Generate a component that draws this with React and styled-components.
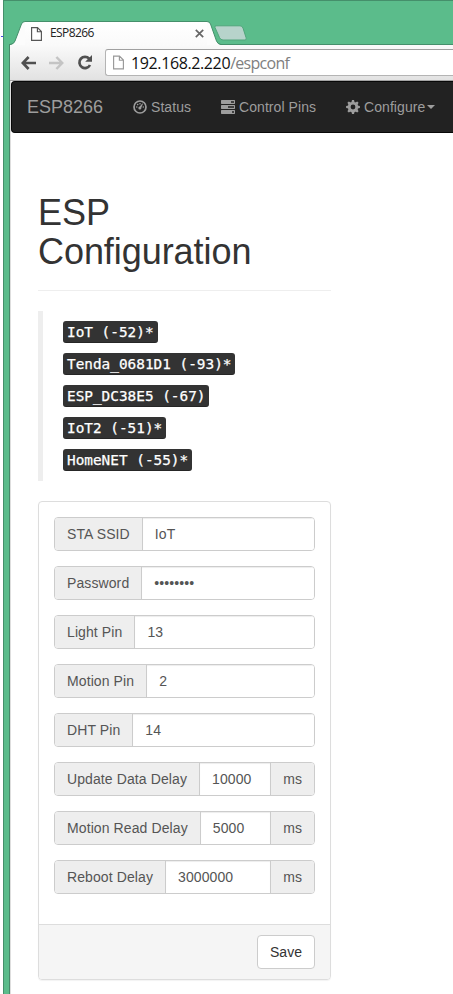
import React from "react";
import styled, { createGlobalStyle } from "styled-components";

const GlobalStyle = createGlobalStyle`
  *, *::before, *::after { box-sizing: border-box; }
  html, body { margin: 0; background: #fff; overflow: hidden; }
  body { font: 14px/20px "Liberation Sans", Arial, sans-serif; color: #333; }
  svg { display: block; flex: none; }
`;

const Desktop = styled.div`
  position: relative;
  height: 994px;
  padding-left: 3px;
  overflow: hidden;
`;

const DesktopMark = styled.i`
  position: absolute;
  left: 1px;
  top: 36px;
  width: 2px;
  height: 1px;
  background: #4747e6;
`;

const Frame = styled.div`
  height: 100%;
  display: flex;
  flex-direction: column;
  background: #5bbc8b;
  border-left: 1px solid #458f6b;
  border-top: 1px solid #458f6b;
`;

const TabStrip = styled.div`
  height: 43px;
  display: flex;
  align-items: flex-end;
  padding-left: 5px;
`;

const Tab = styled.div`
  display: flex;
  height: 24px;
  margin-bottom: -1px;
  z-index: 1;
`;

const TabBody = styled.div`
  width: 182px;
  display: flex;
  align-items: center;
  border-top: 1px solid #458f6b;
  background: linear-gradient(#fff, #fafafa);
  padding: 0 3px 0 6px;
`;

const TabTitle = styled.span`
  flex: 1;
  margin: -2px 0 0 8px;
  font: 12px/16px "Open Sans", "Noto Sans", sans-serif;
  letter-spacing: -0.6px;
  color: #222;
`;

const NewTab = styled.svg`
  margin: 0 0 3px -7px;
`;

const Window = styled.div`
  flex: 1;
  margin-left: 5px;
  display: flex;
  flex-direction: column;
  background: #fff;
  border-left: 1px solid #47896a;
`;

const Toolbar = styled.div`
  height: 37px;
  flex: none;
  display: flex;
  align-items: center;
  gap: 13px;
  padding-left: 11px;
  border-top: 1px solid #458f6b;
  border-bottom: 1px solid #a4a4a4;
  background: linear-gradient(#fafafa, #e2e2e2);
`;

const AddressBar = styled.div`
  flex: 1;
  height: 27px;
  margin-left: -1px;
  display: flex;
  align-items: center;
  gap: 7px;
  padding-left: 7px;
  background: #fff;
  border: 1px solid #b4b4b4;
  border-top-color: #a0a0a0;
  border-right: 0;
  border-radius: 3px 0 0 3px;
`;

const Address = styled.span`
  font: 16px/24px "Open Sans", "Noto Sans", sans-serif;
  letter-spacing: -0.38px;
  color: #111;
`;

const AddressPath = styled.span`
  color: #808080;
  letter-spacing: -0.7px;
`;

const Page = styled.div`
  flex: 1;
  border-left: 1px solid #dedede;
`;

const NavBar = styled.nav`
  height: 52px;
  display: flex;
  align-items: center;
  background: #222;
  border: 1px solid #080808;
  border-right: 0;
  border-radius: 4px 0 0 4px;
  color: #9d9d9d;
  padding-left: 15px;
  white-space: nowrap;
`;

const Brand = styled.span`
  flex: none;
  font-size: 18px;
  width: 106px;
`;

const NavItem = styled.span`
  flex: none;
  display: flex;
  align-items: center;
  gap: 4px;
  margin-right: 30px;
  letter-spacing: 0.06px;
`;

const Caret = styled.i`
  margin-left: -2px;
  border: 4px solid transparent;
  border-top-color: currentColor;
  border-bottom: 0;
`;

const Content = styled.main`
  width: 293px;
  margin: 60px 0 0 27px;
`;

const Heading = styled.h1`
  margin: 0;
  font-size: 36px;
  line-height: 39px;
  letter-spacing: -0.06px;
  font-weight: 400;
  width: 240px;
`;

const Rule = styled.hr`
  margin: 19px 0 20px;
  border: 0;
  border-top: 1px solid #eee;
`;

const Networks = styled.div`
  height: 170px;
  display: flex;
  flex-direction: column;
  align-items: flex-start;
  gap: 10px;
  padding: 10px 20px;
  border-left: 5px solid #eee;
`;

const Network = styled.kbd`
  height: 22px;
  padding: 0 4px;
  font: 14.38px/23px "DejaVu Sans Mono", monospace;
  -webkit-text-stroke: 0.25px #fff;
  color: #fff;
  background: #333;
  border-radius: 3px;
  box-shadow: inset 0 -1px 0 rgba(0, 0, 0, 0.25);
  white-space: pre;
`;

const Panel = styled.form`
  height: 479px;
  margin-top: 20px;
  display: flex;
  flex-direction: column;
  border: 1px solid #ddd;
  border-radius: 4px;
  box-shadow: 0 1px 1px rgba(0, 0, 0, 0.05);
`;

const PanelBody = styled.div`
  flex: 1;
  display: flex;
  flex-direction: column;
  gap: 15px;
  padding: 15px;
`;

const PanelFooter = styled.div`
  height: 55px;
  display: flex;
  justify-content: flex-end;
  padding: 10px 15px;
  background: #f5f5f5;
  border-top: 1px solid #ddd;
  border-radius: 0 0 3px 3px;
`;

const Group = styled.label`
  height: 34px;
  display: flex;
  border: 1px solid #ccc;
  border-radius: 4px;
  overflow: hidden;
  color: #555;
`;

const Addon = styled.span`
  flex: none;
  padding: 6px 12px;
  background: #eee;
  white-space: nowrap;
  letter-spacing: ${(p) => (p.$unit ? "0" : "0.1px")};
`;

const Input = styled.input`
  flex: 1;
  min-width: 0;
  padding: 0 12px;
  border: 0;
  border-left: 1px solid #ccc;
  border-right: ${(p) => (p.$unit ? "1px solid #ccc" : "0")};
  outline: 0;
  font: 14px "Liberation Sans", Arial, sans-serif;
  letter-spacing: 0.1px;
  color: #555;
  background: #fff;
  box-shadow: inset 0 1px 1px rgba(0, 0, 0, 0.075);
`;

const SaveButton = styled.button`
  width: 58px;
  height: 34px;
  padding: 0;
  border: 1px solid #ccc;
  border-radius: 4px;
  background: #fff;
  color: #333;
  font: 14px "Liberation Sans", Arial, sans-serif;
`;

const PageIcon = ({ w, h, color }) => (
  <svg width={w} height={h} viewBox="0 0 11 14" fill="#fff" stroke={color} strokeWidth="1.15">
    <path d="M.6.6H6.5L10.4 4.5V13.4H.6ZM6.4.8V4.7H10.2" />
  </svg>
);

const BackIcon = () => (
  <svg width="15" height="14" viewBox="0 0 15 14" fill="none" stroke="#505050" strokeWidth="2.7">
    <path d="M7.6 1 1.8 7l5.8 6M2 7h13" />
  </svg>
);

const ForwardIcon = () => (
  <svg width="15" height="14" viewBox="0 0 15 14" fill="none" stroke="#c4c4c4" strokeWidth="2.5">
    <path d="M7.4 1l5.8 6-5.8 6M13 7H0" />
  </svg>
);

const ReloadIcon = () => (
  <svg width="16" height="15" viewBox="0 0 16 15">
    <path d="M12.2 3.7A5.6 5.6 0 1 0 13 10" fill="none" stroke="#505050" strokeWidth="2.7" />
    <path d="M15 0v6.8H8.2Z" fill="#505050" />
  </svg>
);

const DashboardIcon = () => (
  <svg width="14" height="14" viewBox="0 0 14 14" fill="currentColor">
    <circle cx="7" cy="7" r="6" fill="none" stroke="currentColor" strokeWidth="1.7" />
    <circle cx="3.8" cy="7" r=".8" />
    <circle cx="4.7" cy="4.6" r=".8" />
    <circle cx="7" cy="3.7" r=".8" />
    <circle cx="10.3" cy="7" r=".8" />
    <path d="M9.3 3.4 10 3.8 8.3 7.7A1.5 1.5 0 1 1 6.7 6.6Z" />
  </svg>
);

const TasksIcon = () => (
  <svg width="14" height="14" viewBox="0 0 14 14" fill="currentColor">
    <path
      fillRule="evenodd"
      d="M.5 0h13l.5.5v3l-.5.5H.5L0 3.5v-3ZM10 1.2v1.5h3V1.2ZM.5 5h13l.5.5v3l-.5.5H.5L0 8.5v-3ZM7 6.2v1.5h6V6.2ZM.5 10h13l.5.5v3l-.5.5H.5L0 13.5v-3ZM11 11.2v1.5h2v-1.5Z"
    />
  </svg>
);

const CogIcon = () => (
  <svg width="14" height="14" viewBox="0 0 14 14">
    <circle cx="7" cy="7" r="3.8" fill="none" stroke="currentColor" strokeWidth="2.8" />
    <g fill="currentColor">
      {[0, 45, 90, 135, 180, 225, 270, 315].map((a) => (
        <path key={a} d="M5.4 2.5 6 .1H8l.6 2.4Z" transform={`rotate(${a} 7 7)`} />
      ))}
    </g>
  </svg>
);

const networks = ["IoT (-52)*", "Tenda_0681D1 (-93)*", "ESP_DC38E5 (-67)", "IoT2 (-51)*", "HomeNET (-55)*"];

const fields = [
  { label: "STA SSID", value: "IoT" },
  { label: "Password", value: "password", type: "password" },
  { label: "Light Pin", value: "13" },
  { label: "Motion Pin", value: "2" },
  { label: "DHT Pin", value: "14" },
  { label: "Update Data Delay", value: "10000", unit: "ms" },
  { label: "Motion Read Delay", value: "5000", unit: "ms" },
  { label: "Reboot Delay", value: "3000000", unit: "ms" },
];

export default function App() {
  return (
    <Desktop>
      <GlobalStyle />
      <DesktopMark />
      <Frame>
        <TabStrip>
          <Tab>
            <svg width="16" height="24" viewBox="0 0 16 24">
              <path d="M1 24Q5 23 6 20L12.5 3Q13.5 .5 16 .5V24Z" fill="#fcfcfc" />
              <path d="M1 23.5Q5 23 6 20L12.5 3Q13.5 .5 16 .5" fill="none" stroke="#458f6b" />
            </svg>
            <TabBody>
              <PageIcon w={11} h={14} color="#555" />
              <TabTitle>ESP8266</TabTitle>
              <svg width="9" height="9" viewBox="0 0 9 9" stroke="#666" strokeWidth="1.7">
                <path d="M.8.8l7.4 7.4M8.2.8.8 8.2" />
              </svg>
            </TabBody>
            <svg width="14" height="24" viewBox="0 0 14 24">
              <path d="M0 .5Q2.5 .5 3.5 3L9.5 20Q10.5 23 14 24H0Z" fill="#fcfcfc" />
              <path d="M0 .5Q2.5 .5 3.5 3L9.5 20Q10.5 23 14 23.5" fill="none" stroke="#458f6b" />
            </svg>
          </Tab>
          <NewTab width="33" height="16" viewBox="0 0 33 16">
            <path d="M2 .8H26Q28 .8 29 3L32 12.5Q33 15 31 15H9Q6.500 15 5.500 12.500L1 2.500Q.5.8 2 .8Z" fill="#b7d3cb" stroke="#51a57b" />
          </NewTab>
        </TabStrip>
        <Window>
          <Toolbar>
            <BackIcon />
            <ForwardIcon />
            <ReloadIcon />
            <AddressBar>
              <PageIcon w={11} h={15} color="#999" />
              <Address>
                192.168.2.220<AddressPath>/espconf</AddressPath>
              </Address>
            </AddressBar>
          </Toolbar>
          <Page>
            <NavBar>
              <Brand>ESP8266</Brand>
              <NavItem><DashboardIcon />Status</NavItem>
              <NavItem><TasksIcon />Control Pins</NavItem>
              <NavItem><CogIcon />Configure<Caret /></NavItem>
            </NavBar>
            <Content>
              <Heading>ESP Configuration</Heading>
              <Rule />
              <Networks>
                {networks.map((n) => <Network key={n}>{n}</Network>)}
              </Networks>
              <Panel>
                <PanelBody>
                  {fields.map((f) => (
                    <Group key={f.label}>
                      <Addon>{f.label}</Addon>
                      <Input type={f.type || "text"} defaultValue={f.value} $unit={f.unit} />
                      {f.unit && <Addon $unit>{f.unit}</Addon>}
                    </Group>
                  ))}
                </PanelBody>
                <PanelFooter>
                  <SaveButton type="button">Save</SaveButton>
                </PanelFooter>
              </Panel>
            </Content>
          </Page>
        </Window>
      </Frame>
    </Desktop>
  );
}
